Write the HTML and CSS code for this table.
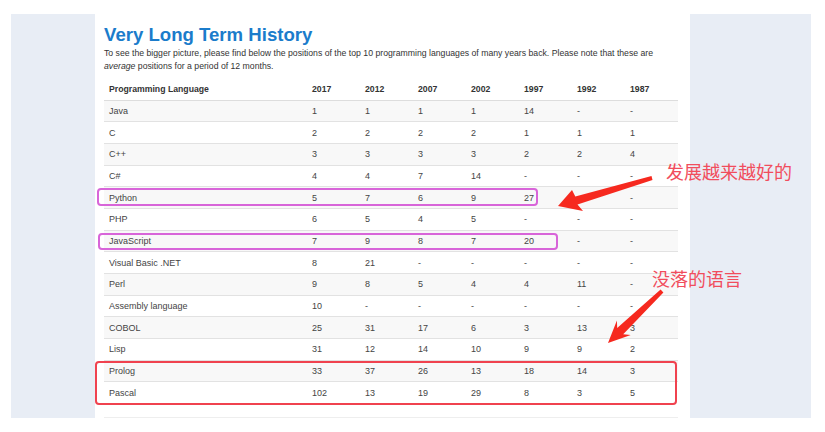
FILE: index.html
```html
<!DOCTYPE html>
<html>
<head>
<meta charset="utf-8">
<link rel="stylesheet" href="styles.css">
</head>
<body>
<div class="page">
  <div class="frame">
    <aside class="side side-left"></aside>
    <main class="content">
      <h1 class="title">Very Long Term History</h1>
      <p class="intro">To see the bigger picture, please find below the positions of the top 10 programming languages of many years back. Please note that these are <em>average</em> positions for a period of 12 months.</p>
      <table class="history">
        <thead>
          <tr><th class="lang">Programming Language</th><th>2017</th><th>2012</th><th>2007</th><th>2002</th><th>1997</th><th>1992</th><th>1987</th></tr>
        </thead>
        <tbody>
          <tr><td class="lang">Java</td><td>1</td><td>1</td><td>1</td><td>1</td><td>14</td><td>-</td><td>-</td></tr>
          <tr><td class="lang">C</td><td>2</td><td>2</td><td>2</td><td>2</td><td>1</td><td>1</td><td>1</td></tr>
          <tr><td class="lang">C++</td><td>3</td><td>3</td><td>3</td><td>3</td><td>2</td><td>2</td><td>4</td></tr>
          <tr><td class="lang">C#</td><td>4</td><td>4</td><td>7</td><td>14</td><td>-</td><td>-</td><td>-</td></tr>
          <tr><td class="lang">Python</td><td>5</td><td>7</td><td>6</td><td>9</td><td>27</td><td>-</td><td>-</td></tr>
          <tr><td class="lang">PHP</td><td>6</td><td>5</td><td>4</td><td>5</td><td>-</td><td>-</td><td>-</td></tr>
          <tr><td class="lang">JavaScript</td><td>7</td><td>9</td><td>8</td><td>7</td><td>20</td><td>-</td><td>-</td></tr>
          <tr><td class="lang">Visual Basic .NET</td><td>8</td><td>21</td><td>-</td><td>-</td><td>-</td><td>-</td><td>-</td></tr>
          <tr><td class="lang">Perl</td><td>9</td><td>8</td><td>5</td><td>4</td><td>4</td><td>11</td><td>-</td></tr>
          <tr><td class="lang">Assembly language</td><td>10</td><td>-</td><td>-</td><td>-</td><td>-</td><td>-</td><td>-</td></tr>
          <tr><td class="lang">COBOL</td><td>25</td><td>31</td><td>17</td><td>6</td><td>3</td><td>13</td><td>3</td></tr>
          <tr><td class="lang">Lisp</td><td>31</td><td>12</td><td>14</td><td>10</td><td>9</td><td>9</td><td>2</td></tr>
          <tr><td class="lang">Prolog</td><td>33</td><td>37</td><td>26</td><td>13</td><td>18</td><td>14</td><td>3</td></tr>
          <tr><td class="lang">Pascal</td><td>102</td><td>13</td><td>19</td><td>29</td><td>8</td><td>3</td><td>5</td></tr>
        </tbody>
      </table>
      <div class="rule"></div>
    </main>
    <aside class="side side-right"></aside>
  </div>

  <div class="mark mark-python"></div>
  <div class="mark mark-js"></div>
  <div class="mark mark-old"></div>
  <span class="note note-up">发展越来越好的</span>
  <span class="note note-down">没落的语言</span>
  <svg class="arrows" width="825" height="432" viewBox="0 0 825 432">
    <polygon fill="#f6291f" points="558,206 583,211 577.5,204.6 652.5,180 651.5,176 575.3,196.6 572,190"/>
    <polygon fill="#f6291f" points="608,343 630.7,335 623.2,334.3 663.4,292.6 660.6,289.4 617.2,328.1 616.9,320.6"/>
  </svg>
</div>
</body>
</html>
```

FILE: styles.css
```css
html, body {
  margin: 0;
  padding: 0;
  background: #ffffff;
}

.page {
  position: relative;
  width: 825px;
  height: 432px;
  overflow: hidden;
  font-family: "Liberation Sans", Arial, "Noto Sans CJK SC", sans-serif;
}

.frame {
  display: flex;
  margin: 14px 14px 0 11px;
  height: 404px;
}

.side {
  background: #e8edf5;
  flex: none;
}

.side-left {
  width: 84px;
}

.side-right {
  width: 121px;
  margin-left: 12px;
}

.content {
  flex: none;
  width: 574px;
  padding-left: 9px;
  background: #ffffff;
}

.title {
  margin: 10px 0 0 0;
  font-size: 18.6px;
  line-height: 21px;
  font-weight: bold;
  color: #1b7ccb;
}

.intro {
  margin: 2px 0 0 0;
  font-size: 8.7px;
  line-height: 13px;
  color: #333333;
}

.intro em {
  font-style: italic;
}

.history {
  margin-top: 6px;
  width: 574px;
  border-collapse: collapse;
  table-layout: fixed;
  font-size: 9px;
  color: #444444;
}

.history th,
.history td {
  box-sizing: border-box;
  width: 53px;
  padding: 0 0 0 5px;
  text-align: left;
  vertical-align: middle;
  white-space: nowrap;
}

.history .lang {
  width: 203px;
}

.history thead tr {
  height: 21px;
}

.history th {
  font-size: 8.7px;
  font-weight: bold;
  color: #333333;
  border-bottom: 1px solid #dddddd;
}

.history tbody tr {
  height: 21.7px;
  border-top: 1px solid #e2e2e2;
}

.history tbody tr:first-child {
  border-top: none;
}

.history tbody tr:nth-child(odd) {
  background: #f8f8f8;
}

.rule {
  margin-top: 13px;
  height: 1px;
  background: #eeeeee;
}

.mark {
  position: absolute;
  box-sizing: border-box;
  border-radius: 4px;
}

.mark-python {
  left: 97px;
  top: 188px;
  width: 441px;
  height: 18px;
  border: 2px solid #d865d9;
}

.mark-js {
  left: 98px;
  top: 233px;
  width: 460px;
  height: 17px;
  border: 2px solid #d865d9;
}

.mark-old {
  left: 95px;
  top: 361px;
  width: 582px;
  height: 44px;
  border: 2px solid #f0424f;
}

.note {
  position: absolute;
  font-family: "Noto Sans CJK SC", sans-serif;
  font-size: 18px;
  line-height: 18px;
  color: #f14d5d;
  white-space: nowrap;
}

.note-up {
  left: 666px;
  top: 162px;
}

.note-down {
  left: 652px;
  top: 269px;
}

.arrows {
  position: absolute;
  left: 0;
  top: 0;
}
```
